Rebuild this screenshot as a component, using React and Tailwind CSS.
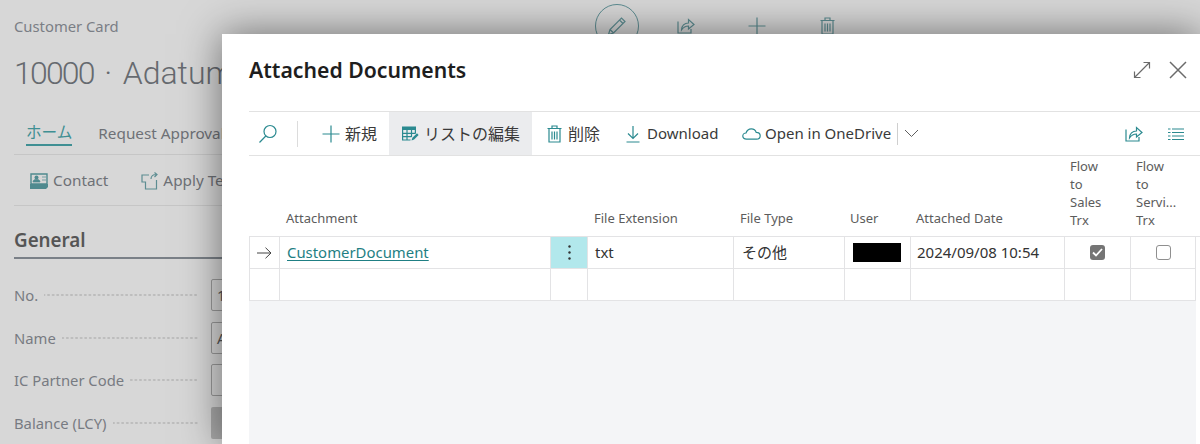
import React from "react";

const FONT = "font-['Noto_Sans','Noto_Sans_CJK_JP',sans-serif]";
const TEAL = "#2b8a90";

// thin outline icon wrapper
const Ico = ({ w = 20, h = 20, color = TEAL, sw = 1.2, children, className = "" }) => (
  <svg width={w} height={h} viewBox={`0 0 ${w} ${h}`} fill="none" stroke={color} strokeWidth={sw} className={`shrink-0 ${className}`}>
    {children}
  </svg>
);

const SearchIcon = () => (
  <Ico>
    <circle cx="12" cy="7.5" r="6" />
    <path d="M7.8 12 1.5 18.5" />
  </Ico>
);
const PlusIcon = ({ color = TEAL }) => (
  <Ico color={color} w={18} h={18}>
    <path d="M9 0.5v17M0.5 9h17" />
  </Ico>
);
const TrashIcon = ({ color = TEAL, sw = 1.2 }) => (
  <Ico w={15} h={18} color={color} sw={sw}>
    <path d="M0.5 3.5h14M5 3.5V1h5v2.5M2 3.5V17h11V3.5M5 6.5v8M7.5 6.5v8M10 6.5v8" />
  </Ico>
);
const ShareIcon = ({ color = TEAL }) => (
  <Ico w={18} h={16} color={color}>
    <path d="M1 3.5V15h13v-4" />
    <path d="M4.5 12c0-4.5 3-7 7-7V1.5L17 6.5l-5.5 4.5V8c-3 0-5 1-7 4Z" />
  </Ico>
);
const ListIcon = () => (
  <Ico w={16} h={14}>
    <path d="M0 2h2.5M4 2h12M0 5.5h2.5M4 5.5h12M0 9h2.5M4 9h12M0 12.5h2.5M4 12.5h12" />
  </Ico>
);
// grid with a dark header row and a pencil over its lower right corner
const EditListIcon = () => (
  <svg width="18" height="16" viewBox="0 0 18 16" fill="none" className="shrink-0">
    <rect x="0" y="0.5" width="14" height="3.5" fill={TEAL} />
    <path d="M0.6 4v10h8M0.6 7.3h13M0.6 10.6h9M5 4v10M9.5 4v7M13.4 4v4" stroke={TEAL} strokeWidth="1.2" />
    <path d="m8.5 15.5 1.2-4L15 6.2l2.7 2.7-5.3 5.3-3.900 1.300Z" fill="#ebecee" />
    <path d="m9.5 14.5.9-2.8 4.6-4.4 1.600 1.600-4.500 4.600-2.600 1Z" fill={TEAL} />
  </svg>
);
const DownloadIcon = () => (
  <Ico w={14} h={18}>
    <path d="M7 1v12M2 8.5 7 13.5l5-5M0.5 17h13" />
  </Ico>
);
const CloudIcon = () => (
  <Ico w={19} h={12}>
    <path d="M4.5 11.2C2.2 11.2 0.8 9.800 0.8 8c0-1.800 1.400-3 3.200-3C4.800 2.500 6.800 0.800 9.300 0.800c2.500 0 4.300 1.500 4.900 3.500 2.400 0 4 1.500 4 3.500s-1.600 3.400-3.700 3.400H4.500Z" />
  </Ico>
);
const Chevron = () => (
  <Ico w={15} h={9} color="#5f5f5f" sw={1}>
    <path d="m1 1 6.5 6.5L14 1" />
  </Ico>
);
const ExpandIcon = () => (
  <Ico w={18} h={18} color="#6b6b6b">
    <path d="M1.5 16.5 16.5 1.5M10.5 1.5h6v6M1.5 10.5v6h6" />
  </Ico>
);
const CloseIcon = () => (
  <Ico w={18} h={18} color="#6b6b6b" sw={1.5}>
    <path d="m1 1 16 16M17 1 1 17" />
  </Ico>
);
const ArrowIcon = () => (
  <Ico w={15} h={12} color="#444" sw={1}>
    <path d="M0 6h14M8.5 0.7 14 6l-5.5 5.3" />
  </Ico>
);
const PencilIcon = () => (
  <Ico w={20} h={20} color="#5d8d92" sw={1.2}>
    <path d="M1.5 18.5 3 13.5 14.5 2l3.500 3.500L6.500 17l-5 1.500ZM12.500 4 16 7.500M3 13.500 6.500 17" />
  </Ico>
);
const ContactIcon = () => (
  <svg width="18" height="16" viewBox="0 0 18 16" className="shrink-0">
    <path d="M1 1h16v10H1z" fill="#d6d6d6" stroke="#4f8a8f" strokeWidth="1.4" />
    <circle cx="6.5" cy="4.5" r="2" fill="#4f8a8f" />
    <path d="M3 9c0-2 1.500-2.500 3.500-2.500S10 7 10 9H3ZM12 4h4M12 7h4" fill="#4f8a8f" stroke="#4f8a8f" strokeWidth=".7" />
    <path d="M0 11h18v3l-2 2H0z" fill="#4f8a8f" />
  </svg>
);
const ApplyIcon = () => (
  <Ico w={17} h={18} color="#5d8d92" sw={1.2}>
    <path d="M8 3H1v7h3.500v7h11V8" />
    <path d="M10 7c0-3 2-4.500 5-4.500M13.500 0.500 16 2.500l-2.500 2.500" />
  </Ico>
);

function ToolButton({ icon, label, cjk, className = "" }) {
  return (
    <div className={`flex h-full items-center text-[#3a3a3a] ${cjk ? "text-[16px]" : "text-[15px]"} ${className}`}>
      {icon}
      <span className="whitespace-nowrap">{label}</span>
    </div>
  );
}

function FieldRow({ label, value, shade }) {
  return (
    <div className="flex h-[32px] items-center">
      <span className="text-[14.8px] whitespace-nowrap text-[#777b82]">{label}</span>
      <span className="mr-[13px] ml-[6px] h-[4px] flex-1 bg-[radial-gradient(circle,#bcbcbc_1px,transparent_1.3px)] bg-[length:4.6px_4px] bg-right" />
      <div className={`flex h-[32px] w-[100px] shrink-0 items-center overflow-hidden rounded-[2px] border border-[#9a9a9a] pl-[5px] text-[14.8px] text-[#555] ${shade ? "border-none bg-[#a9a9a9]" : ""}`}>
        {value}
      </div>
    </div>
  );
}

// column widths line up with the grid rows below
const COLS = "grid-cols-[30px_271px_37px_146px_111px_66px_154px_66px_65px]";

function Cell({ className = "", children }) {
  return (
    <div className={`flex items-center border-r-[1.5px] border-b-[1.5px] border-[#e3e3e5] ${className}`}>
      {children}
    </div>
  );
}

function DocumentsTable() {
  return (
    <div>
      {/* header */}
      <div className={`grid h-[80px] ${COLS} pb-[9px] text-[13px] leading-[18px] text-[#5c5c5c]`}>
        <div />
        <div className="flex items-end pl-[7px]">Attachment</div>
        <div />
        <div className="flex items-end pl-[7px]">File Extension</div>
        <div className="flex items-end pl-[7px]">File Type</div>
        <div className="flex items-end pl-[6px]">User</div>
        <div className="flex items-end pl-[6px]">Attached Date</div>
        <div className="-mb-[2px] flex items-end pl-[6px]">Flow<br />to<br />Sales<br />Trx</div>
        <div className="-mb-[2px] flex items-end pl-[6px]">Flow<br />to<br />Servi...<br />Trx</div>
      </div>
      {/* rows */}
      <div className={`grid ${COLS} auto-rows-[32px] border-t-[1.5px] border-l-[1.5px] border-[#e3e3e5] bg-white text-[15px] text-[#333]`}>
        <Cell className="justify-center"><ArrowIcon /></Cell>
        <Cell className="pl-[7px]"><span className="text-[14.9px] text-[#1f7f84] underline underline-offset-2">CustomerDocument</span></Cell>
        <Cell className="justify-center bg-[#b2e8ec]">
          <svg width="3" height="15" viewBox="0 0 3 15" fill="#333"><circle cx="1.5" cy="1.5" r="1.2" /><circle cx="1.5" cy="7.5" r="1.2" /><circle cx="1.5" cy="13.5" r="1.2" /></svg>
        </Cell>
        <Cell className="pl-[7px]">txt</Cell>
        <Cell className="pl-[8px]">その他</Cell>
        <Cell className="pl-[8px]"><div className="h-[19px] w-[48px] bg-black" /></Cell>
        <Cell className="pl-[6px] whitespace-nowrap">2024/09/08 10:54</Cell>
        <Cell className="justify-center">
          <div className="flex h-[15px] w-[15px] items-center justify-center rounded-[3px] bg-[#757575]">
            <svg width="11" height="9" viewBox="0 0 11 9" fill="none" stroke="#fff" strokeWidth="1.8"><path d="m1 4.5 3 3 6-6.500" /></svg>
          </div>
        </Cell>
        <Cell className="justify-center">
          <div className="h-[15px] w-[15px] rounded-[3px] border-[1.5px] border-[#8f8f8f] bg-white" />
        </Cell>
        {[...Array(9)].map((_, i) => <Cell key={i} />)}
      </div>
    </div>
  );
}

function Modal() {
  return (
    <div className="absolute top-[34px] right-0 bottom-0 left-[222px] bg-white pl-[27px] shadow-[0_0_38px_rgba(0,0,0,0.5)]">
      <div className="flex h-[77px] items-start justify-between pr-[13px]">
        <h1 className="mt-[20px] text-[21.2px] leading-[32px] font-semibold text-[#1e1e1e]">Attached Documents</h1>
        <div className="mt-[27px] flex items-center gap-[18px]">
          <ExpandIcon />
          <CloseIcon />
        </div>
      </div>

      {/* toolbar */}
      <div className="flex h-[45px] items-center border-y-[1.5px] border-[#e2e2e2]">
        <div className="flex h-full w-[49px] shrink-0 items-center pl-[9px]">
          <SearchIcon />
          <span className="ml-[19px] h-[26px] w-px shrink-0 bg-[#dcdcdc]" />
        </div>
        <ToolButton icon={<PlusIcon />} cjk label="新規" className="ml-[24px] w-[67px] gap-[5px]" />
        <ToolButton icon={<EditListIcon />} cjk label="リストの編集" className="w-[143px] gap-[4px] bg-[#ebecee] pl-[13px]" />
        <ToolButton icon={<TrashIcon />} cjk label="削除" className="ml-[15px] w-[79px] gap-[6px]" />
        <ToolButton icon={<DownloadIcon />} label="Download" className="w-[116px] gap-[7px]" />
        <ToolButton icon={<CloudIcon />} label="Open in OneDrive" className="gap-[4px]" />
        <span className="ml-[6px] h-[22px] w-px bg-[#cfcfcf]" />
        <div className="ml-[6px] flex items-center"><Chevron /></div>
        <div className="ml-auto flex items-center gap-[25px] pr-[16px]">
          <ShareIcon />
          <ListIcon />
        </div>
      </div>

      <DocumentsTable />
      <div className="mr-[4px] h-[150px] bg-[#f4f5f7]" />
    </div>
  );
}

export default function App() {
  return (
    <div className={`relative h-[444px] w-[1200px] overflow-hidden bg-[#d7d7d7] ${FONT}`}>
      {/* page behind the dialog */}
      <div className="pl-[14px]">
        <div className="flex h-[52px] items-center">
          <span className="w-[581px] text-[14.8px] text-[#7a7e85]">Customer Card</span>
          <div className="flex h-[44px] w-[44px] items-center justify-center rounded-full border border-[#5d8d92]"><PencilIcon /></div>
          <div className="ml-[38px]"><ShareIcon color="#5d8d92" /></div>
          <div className="ml-[53px]"><PlusIcon color="#5d8d92" /></div>
          <div className="ml-[54px]"><TrashIcon color="#5d8d92" /></div>
        </div>
        {/* the dialog cuts this title off, so it stops at the dialog's edge */}
        <div className="-mt-[2px] w-[208px] overflow-hidden font-['Roboto'] text-[32px] leading-[46px] font-light whitespace-nowrap text-[#666a6f]">
          <span className="tracking-[-1.8px]">10000</span>
          <span className="mx-[10.5px]">·</span>
          <span>Adatum</span>
        </div>
      </div>
      <div className="ml-[14px] w-[400px]">
        <div className="mt-[23px] flex h-[36px] items-center gap-[26px] border-b-[1.5px] border-[#c6c6c6] pb-[7px] pl-[12px] text-[15.3px] whitespace-nowrap text-[#6e7176]">
          <span className="relative flex h-full items-center text-[15.6px] text-[#3f8f93]">
            ホーム
            <span className="absolute right-0 bottom-[1px] left-0 h-[2px] bg-[#3f8f93]" />
          </span>
          <span>Request Approval</span>
        </div>
        <div className="flex h-[51px] items-center gap-[33px] border-b-[1.5px] border-[#c6c6c6] pt-[1px] pl-[16px] text-[15.3px] text-[#6e7176]">
          <div className="flex items-center gap-[5px]"><ContactIcon /><span>Contact</span></div>
          <div className="flex items-center gap-[5px]"><ApplyIcon /><span className="whitespace-nowrap">Apply Template</span></div>
        </div>
        <div className="mt-[21px] border-b-2 border-[#7a8087] pb-[3px] text-[18.8px] leading-[27px] font-semibold text-[#555]">General</div>
        <div className="mt-[20px] flex w-[297px] flex-col gap-[10.6px]">
          <FieldRow label="No." value="10000" />
          <FieldRow label="Name" value="Adatum" />
          <FieldRow label="IC Partner Code" />
          <FieldRow label="Balance (LCY)" shade />
        </div>
      </div>

      <Modal />
    </div>
  );
}
